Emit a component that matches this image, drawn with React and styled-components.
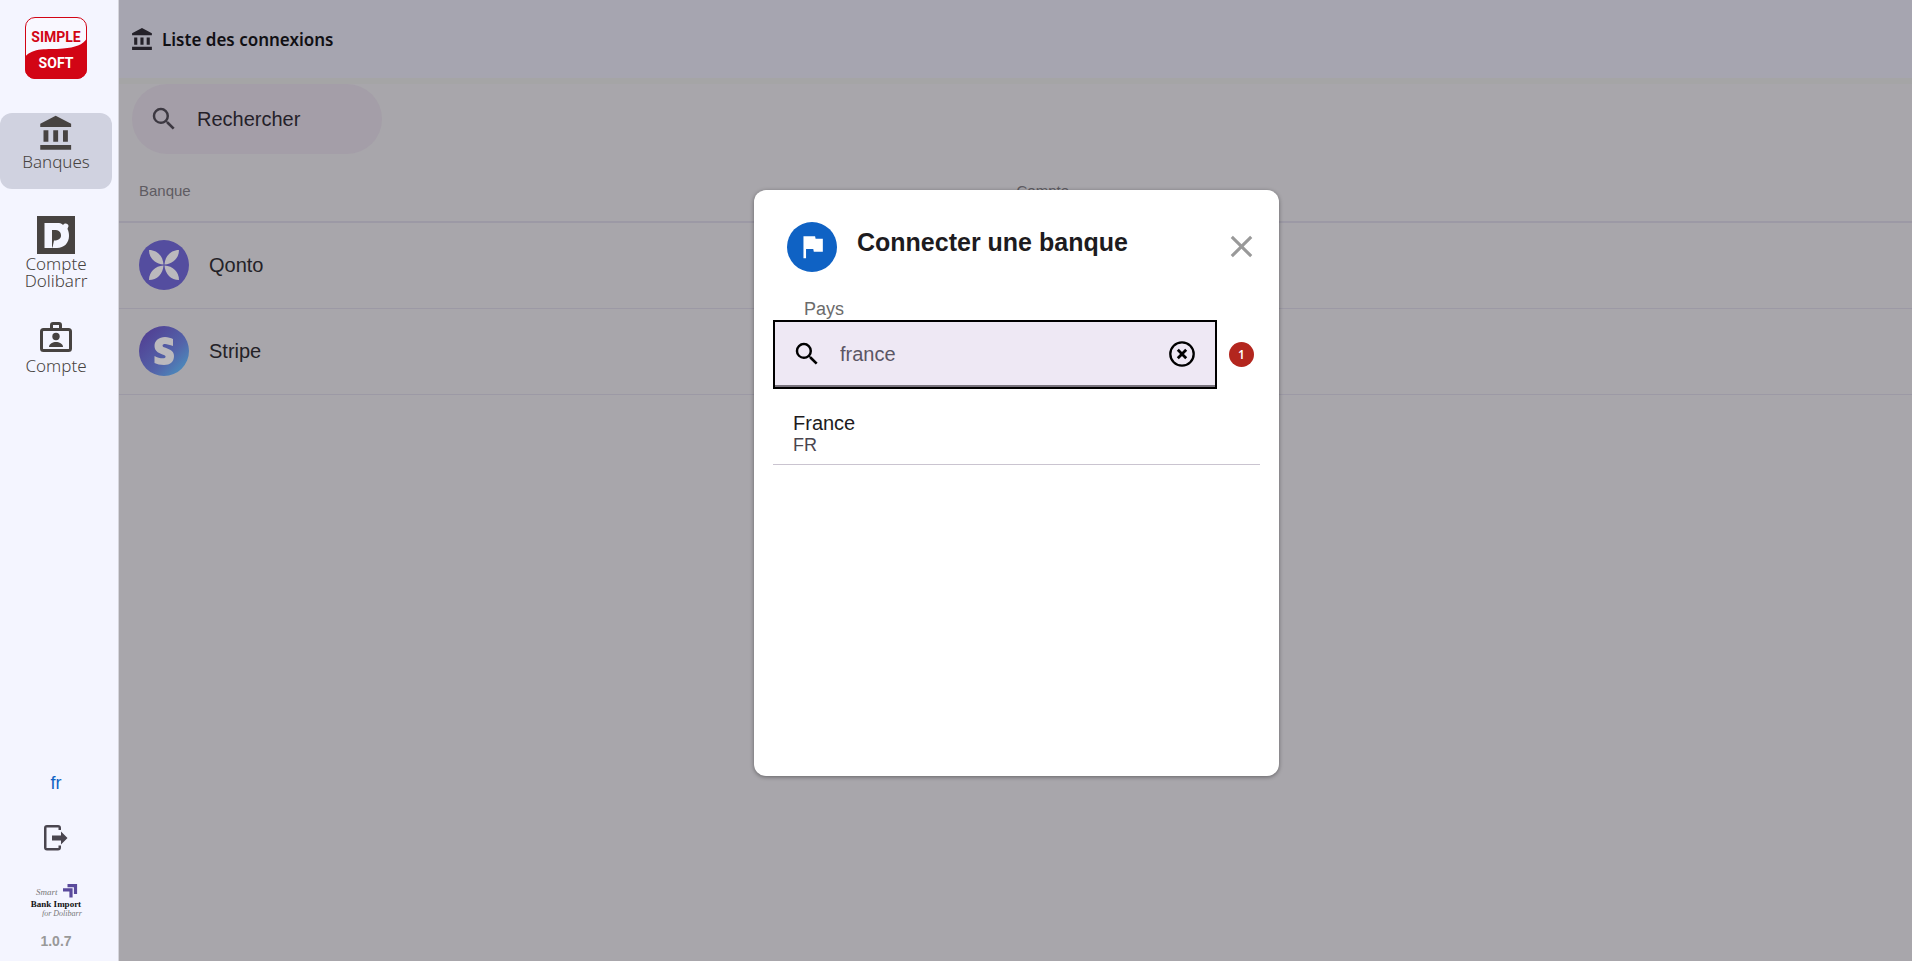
import React, { useState } from "react";
import styled, { createGlobalStyle } from "styled-components";
import { MdSearch, MdClose } from "react-icons/md";

const fonts = {
  ui: '"Noto Sans", "Open Sans", sans-serif',
  body: '"Liberation Sans", Arial, sans-serif'
};

const colors = {
  sidebar: "#f4f5ff",
  active: "#d0d2e0",
  icon: "#49454f",
  blue: "#0f62c4",
  red: "#d20515"
};

/**
 * Resets the page
 */
const Reset = createGlobalStyle`
  *, *::before, *::after {
    box-sizing: border-box;
  }

  body {
    margin: 0;
    font-family: ${fonts.body};
    background: #a8a6ab;
  }

  button, input {
    font: inherit;
  }
`;

/**
 * Styles the page container
 */
const Container = styled.div`
  display: flex;
  min-height: 100vh;
`;

/**
 * Styles the sidebar
 */
const Sidebar = styled.nav`
  display: flex;
  flex: none;
  flex-direction: column;
  align-items: flex-start;
  width: 119px;
  padding: 17px 6px 12px 0;
  border-right: 1px solid #d5d5dc;
  background: ${colors.sidebar};
`;

const LogoLink = styled.a`
  align-self: center;
  height: 62px;
  margin-bottom: 34px;
`;

/**
 * Styles the sidebar items
 */
const NavItem = styled.a`
  display: flex;
  flex-direction: column;
  align-items: center;
  width: 100%;
  height: 76px;
  margin-bottom: 26px;
  border-radius: 12px;
  background: ${props => (props.$active ? colors.active : "transparent")};
  color: #474341;
  font-family: ${fonts.ui};
  font-size: 17px;
  font-weight: 300;
  line-height: 17px;
  text-align: center;
  text-decoration: none;
`;

const NavIcon = styled.span`
  display: flex;
  flex: none;
  align-items: center;
  height: 40px;
`;

const SidebarFooter = styled.div`
  display: flex;
  flex-direction: column;
  align-items: center;
  width: 100%;
  margin-top: auto;
`;

const Language = styled.a`
  color: ${colors.blue};
  font-size: 18px;
  line-height: 20px;
  text-decoration: none;
`;

const LogoutButton = styled.button`
  display: flex;
  margin: 32px 0 30px;
  padding: 0;
  border: 0;
  background: none;
  color: ${colors.icon};
  cursor: pointer;
`;

const Version = styled.span`
  margin-top: 16px;
  color: #999;
  font-size: 14px;
  font-weight: 700;
  line-height: 16px;
`;

/**
 * Styles the main area
 */
const Main = styled.main`
  position: relative;
  flex: 1;
  min-width: 0;
`;

const Header = styled.header`
  display: flex;
  align-items: center;
  gap: 7px;
  height: 84px;
  padding: 0 11px;
  border-bottom: 6px solid #a5a5a6;
  background: #a6a5b0;
  color: #242129;
`;

const Title = styled.h1`
  margin: 0;
  color: #111014;
  font-family: ${fonts.ui};
  font-size: 17px;
  font-weight: 600;
`;

const SearchPill = styled.label`
  display: flex;
  align-items: center;
  gap: 18px;
  width: 250px;
  height: 70px;
  margin-left: 13px;
  padding: 0 17px;
  border-radius: 35px;
  background: #a49ea8;
  color: #3c3841;

  svg {
    flex: none;
  }
`;

const SearchInput = styled.input`
  width: 100%;
  min-width: 0;
  padding: 0;
  border: 0;
  outline: 0;
  background: none;
  color: inherit;
  font-size: 20px;

  &::placeholder {
    color: #242129;
    opacity: 1;
  }
`;

/**
 * Styles the connections table
 */
const Table = styled.table`
  width: 100%;
  border-collapse: collapse;
  table-layout: fixed;
`;

const HeadCell = styled.th`
  height: 68px;
  padding: 5px 0 0 ${props => (props.$first ? "20px" : "1px")};
  border-bottom: 2px solid #9c99a5;
  color: #5e5b62;
  font-size: 15px;
  font-weight: 400;
  text-align: left;
`;

const Cell = styled.td`
  height: 86px;
  padding: 0 0 0 20px;
  border-bottom: 1px solid #9c99a5;
  color: #242227;
  font-size: 20px;
`;

const Bank = styled.div`
  display: flex;
  align-items: center;
  gap: 20px;
`;

/**
 * Styles the dialog
 */
const Overlay = styled.div`
  position: absolute;
  inset: 0;
  display: flex;
  align-items: center;
  justify-content: center;
  padding: 4px 0 0 2px;
`;

const Dialog = styled.section`
  display: flex;
  flex-direction: column;
  width: 525px;
  min-height: 586px;
  padding: 32px 19px;
  border-radius: 12px;
  background: #fff;
  box-shadow: 0 1px 4px rgba(0, 0, 0, 0.4);
`;

const DialogHeader = styled.div`
  display: flex;
  align-items: center;
  gap: 20px;
  height: 50px;
  padding-left: 14px;
`;

const FlagCircle = styled.span`
  display: flex;
  flex: none;
  align-items: center;
  justify-content: center;
  width: 50px;
  height: 50px;
  border-radius: 50%;
  background: ${colors.blue};
  color: #fff;
`;

const DialogTitle = styled.h2`
  flex: 1;
  margin: 0;
  padding-bottom: 8px;
  color: #1d1b20;
  font-size: 25px;
  font-weight: 700;
`;

const CloseButton = styled.button`
  display: flex;
  padding: 0;
  border: 0;
  background: none;
  color: #999;
  cursor: pointer;
`;

const FieldLabel = styled.label`
  margin-top: 26px;
  padding: 0 31px;
  color: #6b6b6b;
  font-size: 18px;
  line-height: 22px;
`;

const FieldRow = styled.div`
  display: flex;
  align-items: center;
  gap: 12px;
`;

const Field = styled.div`
  display: flex;
  flex: 1;
  align-items: center;
  gap: 18px;
  height: 69px;
  padding: 0 20px 0 17px;
  border: 2px solid #000;
  background: #eee8f4;
  box-shadow: inset 0 -2px #79747e;
  color: #000;

  svg {
    flex: none;
  }

  ${SearchInput} {
    color: #5b5664;
  }
`;

const ClearButton = styled(CloseButton)`
  color: #000;
`;

const Count = styled.span`
  display: flex;
  align-items: center;
  justify-content: center;
  width: 25px;
  height: 25px;
  margin-right: 6px;
  border-radius: 50%;
  background: #b3261e;
  color: #fff;
  font-family: ${fonts.ui};
  font-size: 12px;
  font-weight: 600;
`;

const Countries = styled.ul`
  margin: 20px 0 0;
  padding: 0;
  list-style: none;
`;

const Country = styled.li`
  padding: 3px 20px 8px;
  border-bottom: 1px solid #cac4d0;
  color: #1d1b20;
  font-size: 20px;
  line-height: 23px;
`;

const Code = styled.div`
  color: #49454f;
  font-size: 18px;
  line-height: 21px;
`;

/**
 * Displays the company logo
 */
const CompanyLogo = () => (
  <svg width="62" height="62" viewBox="0 0 62 62" role="img">
    <rect x="1" y="1" width="60" height="60" rx="9" fill="#f9f8ff" />
    <path
      d="M0 40C8 30 22 33 38 31.500C50 30.500 58 28 62 21V52A10 10 0 0 1 52 62H10A10 10 0 0 1 0 52Z"
      fill={colors.red}
    />
    <rect
      x="0.500"
      y="0.500"
      width="61"
      height="61"
      rx="9.500"
      fill="none"
      stroke={colors.red}
    />
    <g
      fontFamily="Liberation Sans Narrow, Roboto, sans-serif"
      fontWeight="700"
      textAnchor="middle"
    >
      <text x="31" y="25" fontSize="14" fill={colors.red}>
        SIMPLE
      </text>
      <text x="31" y="51" fontSize="14" fill="#fff">
        SOFT
      </text>
    </g>
  </svg>
);

const BankIcon = ({ size }) => (
  <svg width={size} height={size} viewBox="0 0 24 24" fill="currentColor">
    <path d="M11.500 1L2 6V8H21V6M16 10V17H19V10M2 22H21V19H2M10 10V17H13V10M4 10V17H7V10H4Z" />
  </svg>
);

const FlagIcon = () => (
  <svg width="31" height="31" viewBox="0 0 24 24" fill="currentColor">
    <path d="M14.400 6L14 4H5V21H7V14H12.600L13 16H20V6Z" />
  </svg>
);

const ClearIcon = () => (
  <svg
    width="26"
    height="26"
    viewBox="0 0 26 26"
    fill="none"
    stroke="currentColor"
  >
    <circle cx="13" cy="13" r="11.700" strokeWidth="2.300" />
    <path d="M8.800 8.800L17.200 17.200M17.200 8.800L8.800 17.200" strokeWidth="2.800" />
  </svg>
);

/**
 * Displays the Dolibarr mark
 */
const DolibarrIcon = () => (
  <svg width="38" height="38" viewBox="0 0 38 38" fill="currentColor">
    <path d="M0 0H38V38H0Z" />
    <path
      d="M7.500 7H22C24 7 25 8 26 9C27 6.500 31.500 7 31.500 10C31.500 11 30.500 12 30.500 13C31.500 15 32 17 32 20C32 27 27 32 20 32H7.500Z"
      fill={colors.sidebar}
    />
    <path d="M15 14H17C22 14 24 16 24 19.500C24 23 21 24.500 17 24.500L15.500 31.500H15Z" />
  </svg>
);

const BadgeIcon = () => (
  <svg
    width="32"
    height="31"
    viewBox="0 0 32 31"
    fill="none"
    stroke="currentColor"
    strokeWidth="3"
  >
    <rect x="1.500" y="7.500" width="29" height="21" rx="2" />
    <path d="M11.500 7V3C11.500 2 12 1.500 13 1.500H19C20 1.500 20.500 2 20.500 3V7" />
    <circle cx="16" cy="14.500" r="3.700" fill="currentColor" stroke="none" />
    <path
      d="M9 25C9 21.500 13 20 16 20C19 20 23 21.500 23 25Z"
      fill="currentColor"
      stroke="none"
    />
  </svg>
);

const LogoutIcon = () => (
  <svg width="24" height="26" viewBox="0 0 24 26" fill="currentColor">
    <path d="M3 0H14Q17 0 17 3V5H14.500V2.500H2.500V23H14.500V20.500H17V22.500Q17 25.500 14 25.500H3Q0 25.500 0 22.500V3Q0 0 3 0Z" />
    <path d="M8 10.500H17V6.500L23.500 13L17 19.500V15.500H8Z" />
  </svg>
);

/**
 * Displays the product logo
 */
const ProductLogo = () => (
  <svg width="54" height="36" viewBox="0 0 54 36" role="img">
    <path
      d="M38.500 4.600H46.500V13M34 8.800H42V16.500"
      fill="none"
      stroke="#5a4a9c"
      strokeWidth="3.200"
    />
    <g fontFamily="Liberation Serif, serif">
      <text x="7" y="14" fontSize="9" fontStyle="italic" fill="#777">
        Smart
      </text>
      <text
        x="27"
        y="26"
        fontSize="9"
        fontWeight="700"
        textAnchor="middle"
        fill="#111"
      >
        Bank Import
      </text>
      <text x="13" y="35" fontSize="8" fontStyle="italic" fill="#777">
        for Dolibarr
      </text>
    </g>
  </svg>
);

const QontoLogo = () => (
  <svg width="50" height="50" viewBox="0 0 50 50">
    <circle cx="25" cy="25" r="25" fill="#544d9f" />
    <g fill="#bbb9bd">
      <path d="M10 10C18 10 24 16 24.500 24.500C16 24 10 18 10 10Z" />
      <path d="M40 10C32 10 26 16 25.500 24.500C34 24 40 18 40 10Z" />
      <path d="M10 40C18 40 24 34 24.500 25.500C16 26 10 32 10 40Z" />
      <path d="M40 40C32 40 26 34 25.500 25.500C34 26 40 32 40 40Z" />
    </g>
  </svg>
);

const StripeLogo = () => (
  <svg width="50" height="50" viewBox="0 0 50 50">
    <defs>
      <linearGradient id="stripe" x1="0" y1="0" x2="1" y2="1">
        <stop offset="0.100" stopColor="#513f93" />
        <stop offset="0.600" stopColor="#5363a9" />
        <stop offset="0.900" stopColor="#4b8dbd" />
      </linearGradient>
    </defs>
    <circle cx="25" cy="25" r="25" fill="url(#stripe)" />
    <path
      d="M34 13V20C31 19 28 18 26 18C23 18 23 20.500 25 21.300C29 23 35 24 35 30C35 36 31 39 25 39C21 39 18 38 15.500 37V30C18 31.500 21 32.300 24 32.300C27 32.300 27.500 30 25 29C21 27.500 15.500 26 15.500 20C15.500 14.500 20 11 26 11C29 11 32 12 34 13Z"
      fill="#bbb9bd"
    />
  </svg>
);

/**
 * Sets up the connections
 */
const banks = [
  { name: "Qonto", Logo: QontoLogo },
  { name: "Stripe", Logo: StripeLogo }
];

const countries = [{ name: "France", code: "FR" }];

const App = () => {
  const [query, setQuery] = useState("france");

  const matches = countries.filter(({ name }) =>
    name.toLowerCase().includes(query.toLowerCase())
  );

  /**
   * Displays the connected banks
   */
  const bankRows = banks.map(({ name, Logo }) => (
    <tr key={name}>
      <Cell>
        <Bank>
          <Logo />
          {name}
        </Bank>
      </Cell>
      <Cell />
    </tr>
  ));

  return (
    <>
      <Reset />
      <Container>
        <Sidebar>
          <LogoLink href="#">
            <CompanyLogo />
          </LogoLink>
          <NavItem href="#banques" $active>
            <NavIcon>
              <BankIcon size={39} />
            </NavIcon>
            Banques
          </NavItem>
          <NavItem href="#dolibarr">
            <NavIcon>
              <DolibarrIcon />
            </NavIcon>
            Compte Dolibarr
          </NavItem>
          <NavItem href="#compte">
            <NavIcon>
              <BadgeIcon />
            </NavIcon>
            Compte
          </NavItem>
          <SidebarFooter>
            <Language href="#langue">fr</Language>
            <LogoutButton type="button" aria-label="Déconnexion">
              <LogoutIcon />
            </LogoutButton>
            <ProductLogo />
            <Version>1.0.7</Version>
          </SidebarFooter>
        </Sidebar>
        <Main>
          <Header>
            <BankIcon size={25} />
            <Title>Liste des connexions</Title>
          </Header>
          <SearchPill>
            <MdSearch size={30} />
            <SearchInput type="text" placeholder="Rechercher" />
          </SearchPill>
          <Table>
            <thead>
              <tr>
                <HeadCell $first>Banque</HeadCell>
                <HeadCell>Compte</HeadCell>
              </tr>
            </thead>
            <tbody>{bankRows}</tbody>
          </Table>
          <Overlay>
            <Dialog role="dialog" aria-labelledby="dialog-title">
              <DialogHeader>
                <FlagCircle>
                  <FlagIcon />
                </FlagCircle>
                <DialogTitle id="dialog-title">
                  Connecter une banque
                </DialogTitle>
                <CloseButton type="button" aria-label="Fermer">
                  <MdClose size={37} />
                </CloseButton>
              </DialogHeader>
              <FieldLabel htmlFor="pays">Pays</FieldLabel>
              <FieldRow>
                <Field>
                  <MdSearch size={30} />
                  <SearchInput
                    id="pays"
                    type="text"
                    value={query}
                    onChange={event => setQuery(event.target.value)}
                  />
                  <ClearButton
                    type="button"
                    aria-label="Effacer"
                    onClick={() => setQuery("")}
                  >
                    <ClearIcon />
                  </ClearButton>
                </Field>
                <Count>{matches.length}</Count>
              </FieldRow>
              <Countries>
                {matches.map(({ name, code }) => (
                  <Country key={code}>
                    {name}
                    <Code>{code}</Code>
                  </Country>
                ))}
              </Countries>
            </Dialog>
          </Overlay>
        </Main>
      </Container>
    </>
  );
};

export default App;
